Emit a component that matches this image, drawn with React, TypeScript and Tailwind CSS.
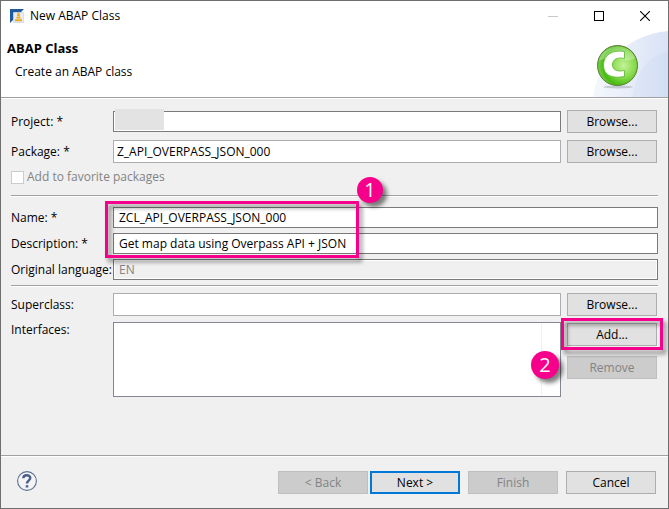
import type { ReactNode } from "react";

const field =
  "min-w-0 flex-1 rounded-none border bg-white outline-none";
const tall = "h-[23px] border-[#abadb3] px-[3px]";
const short = "h-[21px] border-[#7a7a7a] px-[5px]";
const push =
  "flex h-[23px] w-[90px] shrink-0 items-center justify-center border border-[#adadad] bg-[#e1e1e1] disabled:border-[#bfbfbf] disabled:bg-[#cccccc] disabled:text-[#838383]";
const highlight =
  "pointer-events-none absolute border-[3px] border-[#f6008b] drop-shadow-[3px_4px_2px_rgba(0,0,0,0.45)]";
const bubble =
  "pointer-events-none absolute flex items-center justify-center rounded-full bg-[#f6008b] text-[20px] leading-none text-white shadow-[4px_4px_4px_rgba(0,0,0,0.5)]";

function Row({ id, label, children }: { id: string; label: string; children: ReactNode }) {
  return (
    <div className="flex items-center">
      <label htmlFor={id} className="w-[102px] shrink-0 whitespace-nowrap">
        {label}
      </label>
      {children}
    </div>
  );
}

function Separator() {
  return <div className="h-[2px] shrink-0 border-b border-t border-b-white border-t-[#a0a0a0]" />;
}

function TitleIcon() {
  return (
    <svg className="h-[14px] w-[14px]" viewBox="0 0 14 14" aria-hidden="true">
      <path d="M0 0H14L10.500 3.500H3.500V10.500L0 14Z" fill="#1f5a9e" />
      <path d="M3.500 3.500H13.500V13.500H3.500Z" fill="#e6ebf3" stroke="#c5cedb" strokeWidth="0.6" />
      <path d="M7.600 3.800H9.400L10 7H7ZM6.800 7.600H10.200L10.800 9.600H6.200ZM5 10.200H12V12.200H5Z" fill="#efab1e" />
    </svg>
  );
}

function BannerArt() {
  return (
    <svg className="absolute bottom-0 right-0 h-[66px] w-[76px]" viewBox="0 0 76 66" aria-hidden="true">
      <defs>
        <linearGradient id="sky" x1="0" y1="0" x2="1" y2="0">
          <stop offset="0" stopColor="#f4f7fd" />
          <stop offset="1" stopColor="#d9e3f5" />
        </linearGradient>
        <linearGradient id="glow" x1="0" y1="0" x2="1" y2="0">
          <stop offset="0" stopColor="#dce5f6" />
          <stop offset="1" stopColor="#cfdcf2" />
        </linearGradient>
        <radialGradient id="ball" cx="0.65" cy="0.5" r="0.6">
          <stop offset="0" stopColor="#c4f29a" />
          <stop offset="0.5" stopColor="#86da4a" />
          <stop offset="0.85" stopColor="#46bc12" />
          <stop offset="1" stopColor="#6cc83c" />
        </radialGradient>
      </defs>
      <path d="M1 66C4 36 34 4 76 0V66Z" fill="url(#sky)" />
      <path d="M40 66C44 44 54 24 76 21V66Z" fill="url(#glow)" opacity="0.7" />
      <ellipse cx="26" cy="56" rx="15" ry="1.500" fill="#77808c" opacity="0.35" />
      <circle cx="25.500" cy="34.500" r="20" fill="url(#ball)" stroke="#5f7a35" />
      <path d="M7 30A19 19 0 0 1 43 27C34 34 20 22 7 30Z" fill="#fff" opacity="0.3" />
      <path
        d="M32.500 20.500V27.500C25.500 26 20.500 28 20.500 34C20.500 39 25.500 41 32.500 39.500V45.500C20 48 11.500 44 11.500 34.500C11.500 24 20 18.500 32.500 20.500Z"
        fill="#fff"
        stroke="#58b52c"
        strokeWidth="0.8"
      />
    </svg>
  );
}

export default function App() {
  return (
    <main className="flex min-h-screen w-full flex-col border border-[#6e6e6e] bg-[#f0f0f0] font-['Open_Sans','Noto_Sans',sans-serif] text-[12px] leading-[16px] text-black">
      <header className="relative h-[96px] shrink-0 bg-white">
        <BannerArt />
        <div className="relative flex h-[29px] items-center pl-[9px]">
          <TitleIcon />
          <span className="ml-[6px] flex-1">New ABAP Class</span>
          <button aria-label="Minimize" disabled className="flex h-full w-[46px] items-center justify-center text-[#c8c8c8]">
            <svg className="h-[10px] w-[10px]" viewBox="0 0 10 10" shapeRendering="crispEdges">
              <path d="M0 5.500H10" stroke="currentColor" />
            </svg>
          </button>
          <button aria-label="Maximize" className="flex h-full w-[46px] items-center justify-center">
            <svg className="h-[10px] w-[10px]" viewBox="0 0 10 10" shapeRendering="crispEdges">
              <path d="M.5 .5H9.500V9.500H.5Z" fill="none" stroke="currentColor" />
            </svg>
          </button>
          <button aria-label="Close" className="flex h-full w-[46px] items-center justify-center">
            <svg className="h-[10px] w-[10px]" viewBox="0 0 10 10">
              <path d="M0 0L10 10M10 0L0 10" fill="none" stroke="currentColor" strokeWidth="1.1" />
            </svg>
          </button>
        </div>
        <div className="relative pt-[10px]">
          <h1 className="pl-[6px] text-[13px] font-bold leading-[16px]">ABAP Class</h1>
          <p className="pl-[14px] pt-[8px]">Create an ABAP class</p>
        </div>
      </header>
      <Separator />

      <form className="flex flex-1 flex-col px-[10px] pt-[11px]" onSubmit={(e) => e.preventDefault()}>
        <div className="relative">
          <Row id="project" label="Project: *">
            <input id="project" className={`${field} ${short}`} />
            <button type="button" className={`${push} ml-[6px] mr-px`}>Browse...</button>
          </Row>
          <div className="pointer-events-none absolute -top-px left-[104px] h-[21px] w-[49px] bg-[#e3e3e3]" />
        </div>
        <div className="mt-[7px]">
          <Row id="package" label="Package: *">
            <input id="package" defaultValue="Z_API_OVERPASS_JSON_000" className={`${field} ${tall}`} />
            <button type="button" className={`${push} ml-[6px] mr-px`}>Browse...</button>
          </Row>
        </div>
        <div className="mb-[10px] mt-[6px] flex items-center gap-[3px] text-[#838383]">
          <input id="favorite" type="checkbox" disabled className="h-[13px] w-[13px] appearance-none border border-[#cccccc] bg-white" />
          <label htmlFor="favorite">Add to favorite packages</label>
        </div>
        <Separator />

        <div className="relative mb-[5px] mt-[10px] flex flex-col gap-[5px]">
          <Row id="name" label="Name: *">
            <input id="name" defaultValue="ZCL_API_OVERPASS_JSON_000" className={`${field} ${short}`} />
          </Row>
          <Row id="description" label="Description: *">
            <input id="description" defaultValue="Get map data using Overpass API + JSON" className={`${field} ${short}`} />
          </Row>
          <Row id="language" label="Original language:">
            <input
              id="language"
              disabled
              defaultValue="EN"
              className="h-[21px] min-w-0 flex-1 border border-[#7a7a7a] bg-[#f0f0f0] px-[5px] text-[#838383] shadow-[inset_0_0_0_1px_white]"
            />
          </Row>
          <div className={`${highlight} -top-[6px] left-[94px] h-[57px] w-[254px]`} />
          <span className={`${bubble} -top-[30px] left-[346px] h-[26px] w-[26px]`}>1</span>
        </div>
        <Separator />

        <div className="mt-[6px]">
          <Row id="superclass" label="Superclass:">
            <input id="superclass" className={`${field} ${tall}`} />
            <button type="button" className={`${push} ml-[6px] mr-px`}>Browse...</button>
          </Row>
        </div>
        <div className="mt-[6px] flex">
          <label htmlFor="interfaces" className="w-[102px] shrink-0">Interfaces:</label>
          <select
            id="interfaces"
            multiple
            className="h-[75px] min-w-0 flex-1 appearance-none border border-[#828790] bg-white bg-[linear-gradient(to_left,transparent_18px,#eaf3fb_18px,#eaf3fb_19px,transparent_19px)] outline-none"
          />
          <div className="relative ml-[6px] mr-px mt-px flex flex-col gap-[10px]">
            <button type="button" className={push}>Add...</button>
            <button type="button" disabled className={push}>Remove</button>
            <div className={`${highlight} -left-[6px] -top-[5px] h-[32px] w-[102px]`} />
            <span className={`${bubble} -left-[36px] top-[28px] h-[28px] w-[28px]`}>2</span>
          </div>
        </div>
      </form>

      <Separator />
      <footer className="flex h-[51px] shrink-0 items-start pl-[16px] pr-[12px] pt-[14px]">
        <button aria-label="Help" className="h-[20px] w-[20px]">
          <svg className="h-[20px] w-[20px]" viewBox="0 0 20 20">
            <circle cx="10" cy="10" r="9.400" fill="#f4f4f6" stroke="#5b7196" strokeWidth="1.100" />
            <path d="M6.300 7.300C6.300 3.300 13.300 3.300 13.300 7C13.300 9.300 10 9.500 10 12.600" fill="none" stroke="#4c6087" strokeWidth="2.400" />
            <path d="M8.700 14.200H11.300V16.500H8.700Z" fill="#4c6087" />
          </svg>
        </button>
        <div className="ml-auto flex gap-[8px]">
          <div className="flex gap-[2px]">
            <button disabled className={push}>&lt; Back</button>
            <button className="h-[23px] w-[90px] border-2 border-[#0078d7] bg-[#e1e1e1] leading-none">Next &gt;</button>
          </div>
          <button disabled className={push}>Finish</button>
          <button className={push}>Cancel</button>
        </div>
      </footer>
    </main>
  );
}
